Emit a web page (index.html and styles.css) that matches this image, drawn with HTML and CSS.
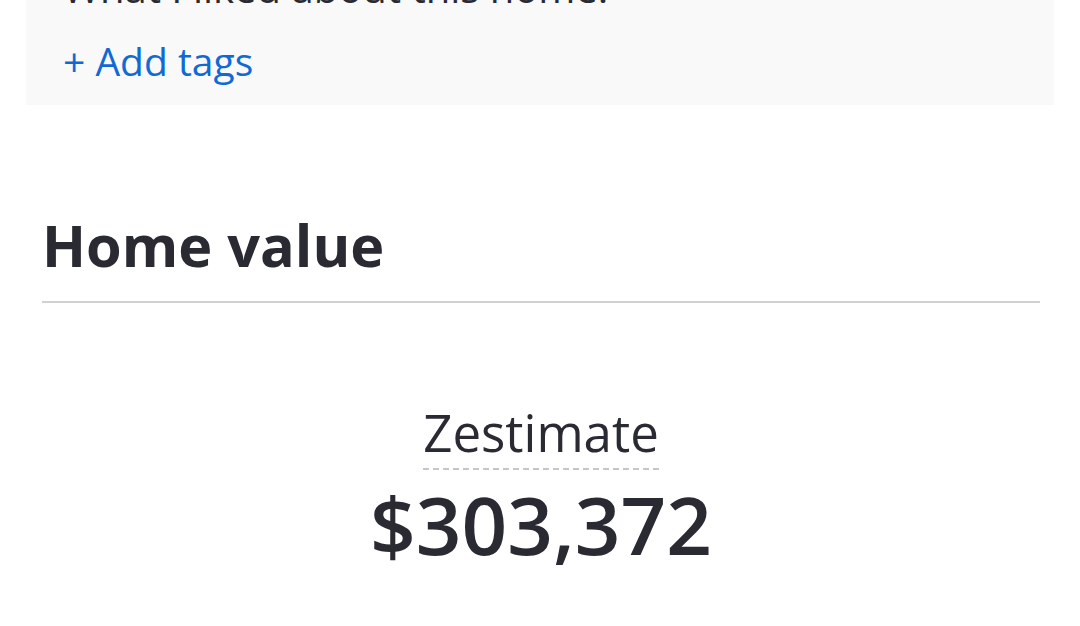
FILE: index.html
```html
<!DOCTYPE html>
<html>
<head>
<meta charset="utf-8">
<link rel="stylesheet" href="styles.css">
</head>
<body>
<div class="page">
  <div class="notes-card">
    <div class="notes-title">What I liked about this home.</div>
    <a class="add-tags">+ Add tags</a>
  </div>
  <section class="home-value">
    <h2 class="section-title">Home value</h2>
    <div class="divider"></div>
    <div class="zestimate">
      <span class="zest-label">Zestimate</span>
      <div class="zest-price">$303,372</div>
    </div>
  </section>
</div>
</body>
</html>
```
FILE: styles.css
```css
html, body {
  margin: 0;
  padding: 0;
  background: #ffffff;
}
body {
  font-family: "Open Sans", "Noto Sans", sans-serif;
  color: #2a2a33;
  width: 1080px;
  height: 626px;
  overflow: hidden;
}
.page {
  display: flex;
  flex-direction: column;
}
.notes-card {
  margin: 0 26px;
  background: #f9f9f9;
  padding: 0 37px 20px;
  display: flex;
  flex-direction: column;
}
.notes-title {
  margin-top: -36px;
  font-size: 40px;
  line-height: 48px;
  font-weight: 500;
  color: #2a2a33;
}
.add-tags {
  margin-top: 25px;
  font-size: 39px;
  line-height: 48px;
  font-weight: 500;
  color: #0f6ad6;
  text-decoration: none;
}
.home-value {
  margin: 105px 40px 0 42px;
  display: flex;
  flex-direction: column;
}
.section-title {
  margin: 0;
  font-size: 57.6px;
  line-height: 70px;
  font-weight: 700;
  color: #2a2a33;
}
.divider {
  margin-top: 21px;
  height: 2px;
  background: #d1d1d5;
}
.zestimate {
  margin-top: 99px;
  display: flex;
  flex-direction: column;
  align-items: center;
}
.zest-label {
  font-size: 51px;
  line-height: 60px;
  font-weight: 500;
  padding-bottom: 6px;
  border-bottom: 2px dashed #c6c6ca;
}
.zest-price {
  margin-top: 4px;
  font-size: 80px;
  line-height: 100px;
  font-weight: 600;
}
```
